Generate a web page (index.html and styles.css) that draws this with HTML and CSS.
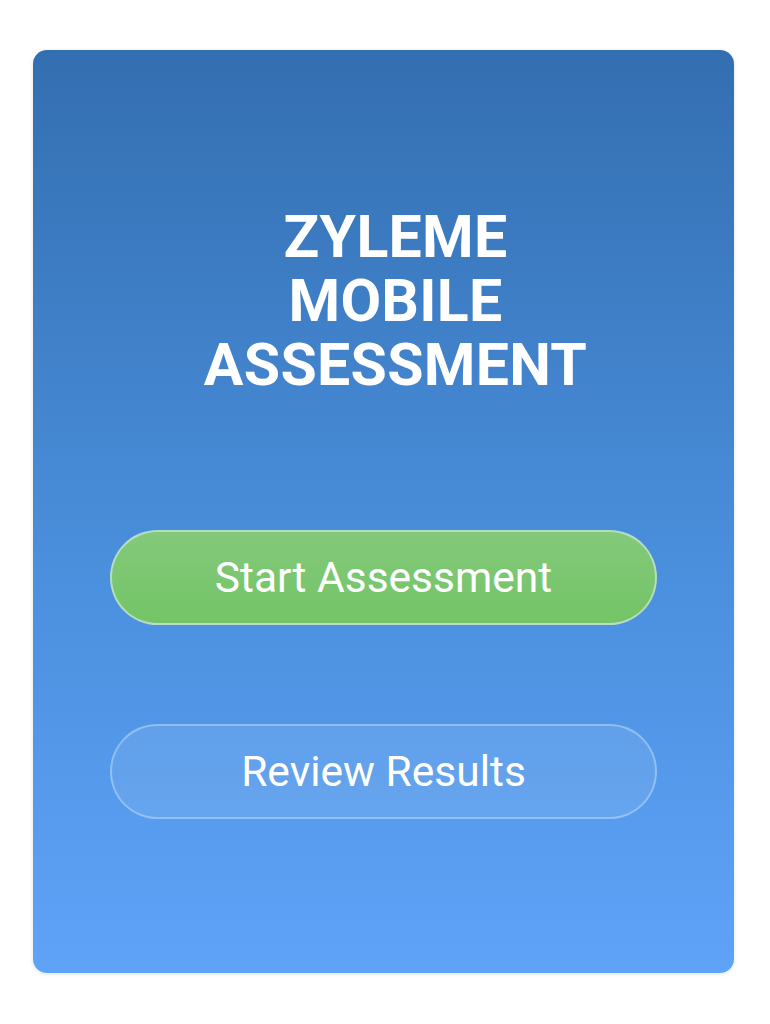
FILE: index.html
```html
<!DOCTYPE html>
<html lang="en">
<head>
<meta charset="utf-8">
<title>Zyleme Mobile Assessment</title>
<link rel="stylesheet" href="styles.css">
</head>
<body>
<div class="page">
  <main class="card">
    <h1 class="title">ZYLEME<br>MOBILE<br>ASSESSMENT</h1>
    <div class="actions">
      <button class="btn btn-primary">Start Assessment</button>
      <button class="btn btn-secondary">Review Results</button>
    </div>
  </main>
</div>
</body>
</html>
```
FILE: styles.css
```css
html, body {
  margin: 0;
  padding: 0;
  background: #ffffff;
}
body {
  font-family: Roboto, "Noto Sans", "Liberation Sans", sans-serif;
}
.page {
  padding: 50px 36px 51px 33px;
}
.card {
  height: 923px;
  box-sizing: border-box;
  border-radius: 14px;
  background: linear-gradient(180deg, #336eb0 0%, #4a8fdc 55%, #5ea3f8 100%);
  box-shadow: 0 1px 4px rgba(0, 0, 0, 0.12);
  padding-top: 155px;
  display: flex;
  flex-direction: column;
  align-items: center;
}
.title {
  margin: 0;
  color: #ffffff;
  font-weight: 700;
  font-size: 59px;
  line-height: 64px;
  text-align: center;
  padding-left: 24px;
  letter-spacing: 0.3px;
}
.actions {
  margin-top: 133px;
  display: flex;
  flex-direction: column;
  gap: 99px;
  width: 547px;
}
.btn {
  height: 95px;
  border-radius: 48px;
  font-family: inherit;
  font-size: 42.5px;
  color: #ffffff;
  box-sizing: border-box;
  padding: 0;
  cursor: pointer;
}
.btn-primary {
  background: linear-gradient(180deg, #83c97a 0%, #74c467 100%);
  border: 2px solid rgba(200, 230, 220, 0.75);
}
.btn-secondary {
  background: rgba(255, 255, 255, 0.09);
  border: 2px solid rgba(255, 255, 255, 0.3);
}
```
